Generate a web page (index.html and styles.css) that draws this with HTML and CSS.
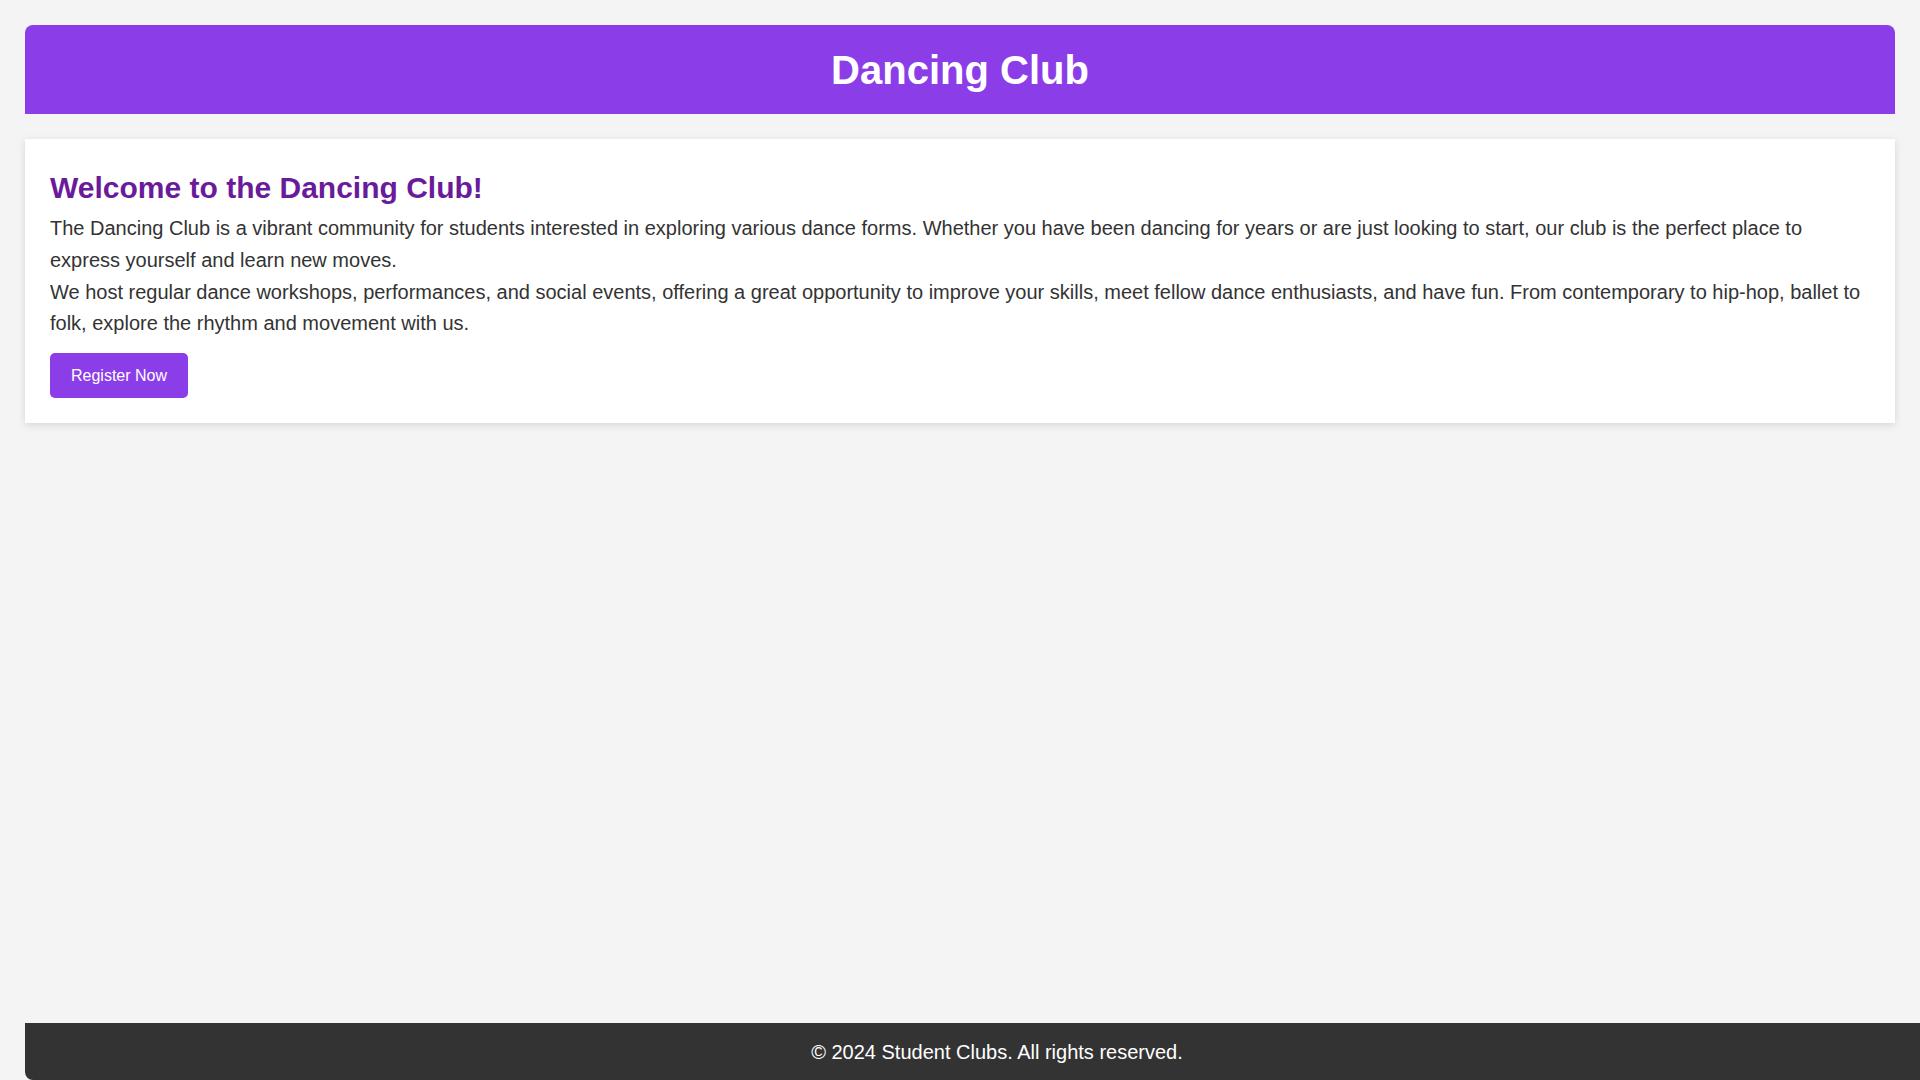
FILE: index.html
```html
<!DOCTYPE html>
<html lang="en">
<head>
<meta charset="UTF-8">
<title>Dancing Club</title>
<link rel="stylesheet" href="styles.css">
</head>
<body>
<header class="site-header">
  <h1 class="site-title">Dancing Club</h1>
</header>
<main class="card">
  <h2 class="card-title">Welcome to the Dancing Club!</h2>
  <p class="card-text">The Dancing Club is a vibrant community for students interested in exploring various dance forms. Whether you have been dancing for years or are just looking to start, our club is the perfect place to express yourself and learn new moves.</p>
  <p class="card-text">We host regular dance workshops, performances, and social events, offering a great opportunity to improve your skills, meet fellow dance enthusiasts, and have fun. From contemporary to hip-hop, ballet to folk, explore the rhythm and movement with us.</p>
  <button class="register-btn" type="button">Register Now</button>
</main>
<footer class="site-footer">
  <p class="footer-text">&copy; 2024 Student Clubs. All rights reserved.</p>
</footer>
</body>
</html>
```

FILE: styles.css
```css
html, body {
  height: 100%;
}

body {
  margin: 0;
  padding: 25px;
  box-sizing: border-box;
  background: #f4f4f4;
  color: #333;
  font-family: "Liberation Sans", Arial, sans-serif;
  font-size: 20px;
  line-height: 1.6;
}

.site-header {
  background: #8b3de8;
  color: #fff;
  text-align: center;
  border-radius: 8px 8px 0 0;
  padding: 13px 0 12px;
}

.site-title {
  margin: 0;
  font-size: 40px;
  line-height: 64px;
  font-weight: bold;
}

.card {
  display: block;
  background: #fff;
  margin-top: 25px;
  padding: 25px;
  box-shadow: 0 2px 8px rgba(0, 0, 0, 0.12);
}

.card-title {
  margin: 0 0 2px;
  color: #6a1b9a;
  font-size: 30px;
  line-height: 47px;
  font-weight: bold;
}

.card-text {
  margin: 0;
  line-height: 31.8px;
}

.register-btn {
  display: block;
  margin-top: 13px;
  background: #8b3de8;
  color: #fff;
  border: none;
  border-radius: 5px;
  padding: 13px 21px;
  font-family: "Liberation Sans", Arial, sans-serif;
  font-size: 16px;
  line-height: 19px;
  cursor: pointer;
}

.site-footer {
  position: fixed;
  bottom: 0;
  width: 100%;
  background: #333;
  color: #fff;
  text-align: center;
  border-radius: 0 0 8px 8px;
  padding: 13px 12px 11px;
}

.footer-text {
  margin: 0;
  font-size: 20px;
  line-height: 33px;
}
```
